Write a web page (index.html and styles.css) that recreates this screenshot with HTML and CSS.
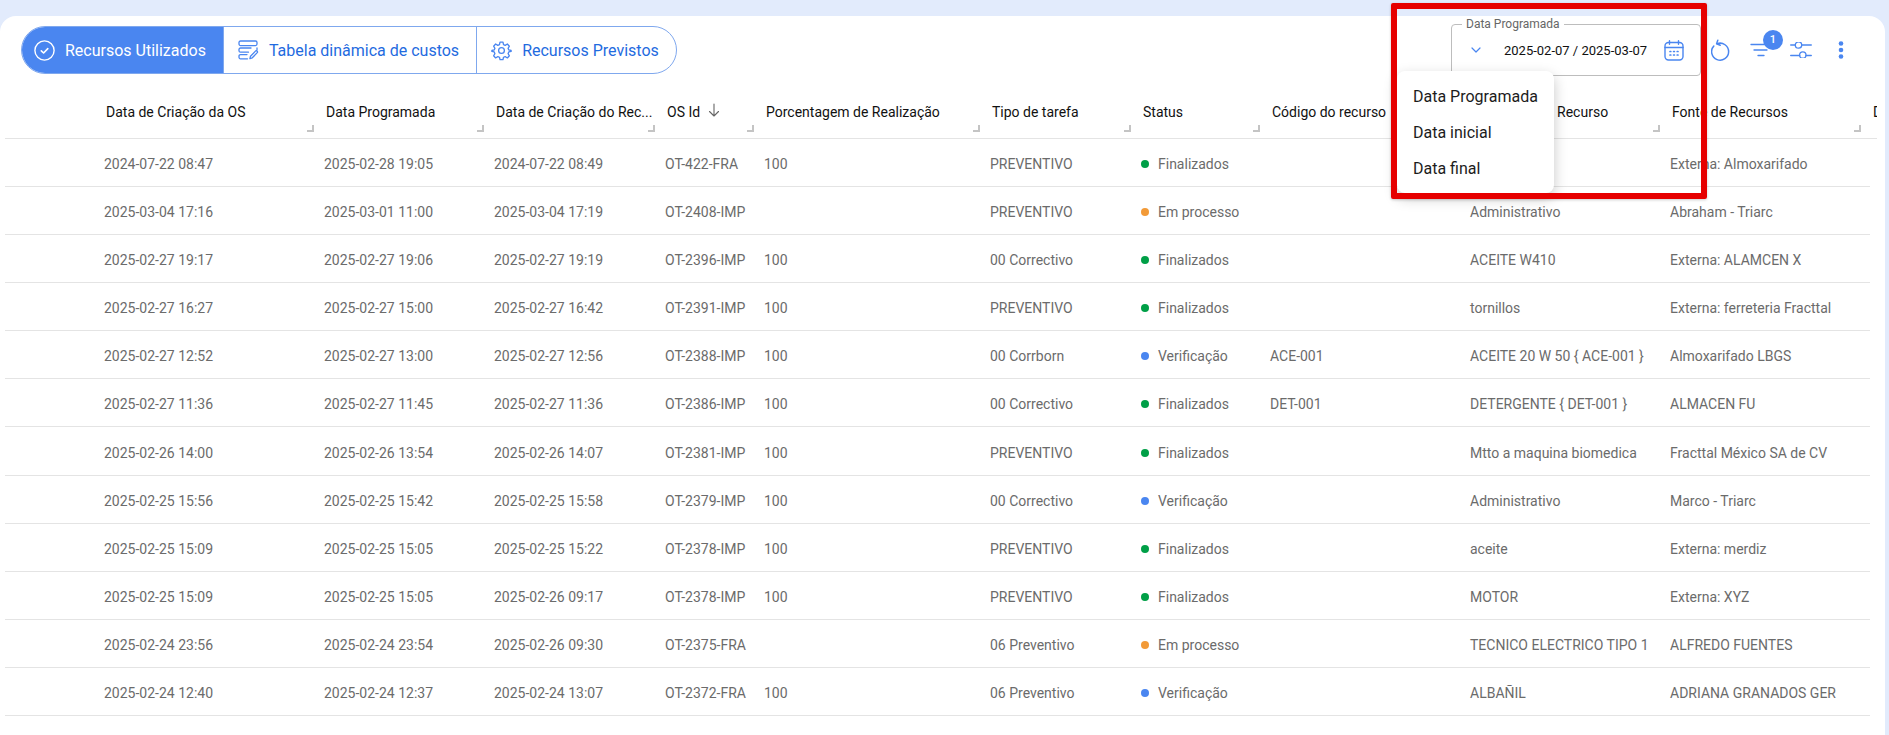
FILE: index.html
```html
<!DOCTYPE html>
<html lang="pt">
<head>
<meta charset="utf-8">
<title>Recursos Utilizados</title>
<link rel="stylesheet" href="styles.css">
</head>
<body>
<div class="app">
  <main class="card">
    <div class="toolbar">
      <nav class="tabs">
        <a class="tab tab-active">
          <svg class="tab-icon" viewBox="0 0 21 21" fill="none" stroke="currentColor" stroke-width="1.4" stroke-linecap="round" stroke-linejoin="round"><circle cx="10.5" cy="10.5" r="9.6"/><path d="M7.3 10.8l2.3 2.2 4.2-4.4" stroke-width="1.6"/></svg>
          <span>Recursos Utilizados</span>
        </a>
        <a class="tab">
          <svg class="tab-icon" viewBox="0 0 21 21" fill="none" stroke="currentColor" stroke-width="1.3" stroke-linecap="round" stroke-linejoin="round"><rect x="1" y="1" width="18" height="4.6" rx="1.5"/><path d="M13 8H2.5A1.5 1.5 0 0 0 1 9.5v1.2a1.5 1.5 0 0 0 1.5 1.5h8M9 14.6H2.5A1.5 1.5 0 0 0 1 16.100v1.200a1.500 1.500 0 0 0 1.500 1.500h7"/><path d="M19 8v1.800M19.500 12.400l-5.200 5.400-2.400.9.600-2.500 5.200-5.300a1.300 1.300 0 0 1 1.800 1.500z"/></svg>
          <span>Tabela dinâmica de custos</span>
        </a>
        <a class="tab">
          <svg class="tab-icon" viewBox="0 0 24 24" fill="none" stroke="currentColor" stroke-width="1.500" stroke-linecap="round" stroke-linejoin="round"><circle cx="12" cy="12" r="3.300"/><path d="M10.300 2.500h3.400l.6 2.900 1.900.8 2.500-1.600 2.300 2.500-1.500 2.400.8 1.900 2.700.6v1l-2.700.7-.8 1.900 1.500 2.400-2.300 2.500-2.500-1.600-1.900.8-.6 2.800h-3.400l-.6-2.800-1.900-.8-2.500 1.600-2.300-2.500 1.500-2.400-.8-1.900-2.700-.7v-1l2.700-.6.8-1.900-1.500-2.400 2.300-2.500 2.500 1.600 1.900-.8z"/></svg>
          <span>Recursos Previstos</span>
        </a>
      </nav>
      <div class="actions">
        <div class="date-field">
          <span class="date-legend">Data Programada</span>
          <svg class="chevron" viewBox="0 0 10 6" fill="none" stroke="#4a86f0" stroke-width="1.200" stroke-linecap="round" stroke-linejoin="round"><path d="M1 1l4 4 4-4"/></svg>
          <span class="date-value">2025-02-07 / 2025-03-07</span>
          <svg class="calendar" viewBox="0 0 20 21" fill="none" stroke="#4a86f0" stroke-width="1.400" stroke-linecap="round"><rect x="1" y="2.500" width="18" height="17.500" rx="3.500"/><path d="M1 7.500h18M5.500 .8v3.500M14.500 .8v3.500"/><path d="M6 11.500h.8M9.600 11.500h.8M13.200 11.500h.8M6 15h.8M9.600 15h.8M13.200 15h.8" stroke-width="1.700"/></svg>
        </div>
        <button class="icon-btn" type="button" aria-label="Recarregar">
          <svg viewBox="0 0 20 20" width="20" height="22" fill="none" stroke="#4a86f0" stroke-width="1.500" stroke-linecap="round" stroke-linejoin="round"><path d="M6.200 3.700A8.500 8.500 0 1 1 2.800 6"/><path d="M6.800 .2L5.600 3.800l3.600 1.400"/></svg>
        </button>
        <button class="icon-btn" type="button" aria-label="Filtros">
          <svg viewBox="0 0 24 14" width="24" height="14" fill="none" stroke="#4a86f0" stroke-width="1.300" stroke-linecap="round"><path d="M2 1.500h19M5 7h13M9 12.500h6"/></svg>
          <span class="badge">1</span>
        </button>
        <button class="icon-btn" type="button" aria-label="Colunas">
          <svg viewBox="0 0 22 16" width="22" height="16" fill="none" stroke="#4a86f0" stroke-width="1.300" stroke-linecap="round"><path d="M.7 3h4.500M12 3h9.300M.7 13.500h9M16 13.500h5.300"/><circle cx="8.500" cy="3" r="3.200"/><circle cx="12.800" cy="13" r="3.200"/></svg>
        </button>
        <button class="icon-btn" type="button" aria-label="Mais">
          <svg viewBox="0 0 6 18" width="6" height="18" fill="#4a86f0"><circle cx="3" cy="2.500" r="2.300"/><circle cx="3" cy="9" r="2.300"/><circle cx="3" cy="15.500" r="2.300"/></svg>
        </button>
      </div>
    </div>

    <section class="grid">
      <div class="row head">
        <div class="hc"></div>
        <div class="hc grip">Data de Criação da OS</div>
        <div class="hc grip">Data Programada</div>
        <div class="hc grip">Data de Criação do Rec...</div>
        <div class="hc grip">OS Id<svg class="sort" viewBox="0 0 12 14" fill="none" stroke="#666" stroke-width="1.100" stroke-linecap="round" stroke-linejoin="round"><path d="M6 1v12M1.500 8.500L6 13l4.500-4.500"/></svg></div>
        <div class="hc grip">Porcentagem de Realização</div>
        <div class="hc grip">Tipo de tarefa</div>
        <div class="hc grip">Status</div>
        <div class="hc grip">Código do recurso</div>
        <div class="hc grip">Descrição do Recurso</div>
        <div class="hc grip">Fonte de Recursos</div>
        <div class="hc">Data</div>
      </div>

      <div class="row body"><div></div><div>2024-07-22 08:47</div><div>2025-02-28 19:05</div><div>2024-07-22 08:49</div><div>OT-422-FRA</div><div>100</div><div>PREVENTIVO</div><div class="st ok">Finalizados</div><div></div><div></div><div>Externa: Almoxarifado</div><div></div></div>
      <div class="row body"><div></div><div>2025-03-04 17:16</div><div>2025-03-01 11:00</div><div>2025-03-04 17:19</div><div>OT-2408-IMP</div><div></div><div>PREVENTIVO</div><div class="st wip">Em processo</div><div></div><div>Administrativo</div><div>Abraham - Triarc</div><div></div></div>
      <div class="row body"><div></div><div>2025-02-27 19:17</div><div>2025-02-27 19:06</div><div>2025-02-27 19:19</div><div>OT-2396-IMP</div><div>100</div><div>00 Correctivo</div><div class="st ok">Finalizados</div><div></div><div>ACEITE W410</div><div>Externa: ALAMCEN X</div><div></div></div>
      <div class="row body"><div></div><div>2025-02-27 16:27</div><div>2025-02-27 15:00</div><div>2025-02-27 16:42</div><div>OT-2391-IMP</div><div>100</div><div>PREVENTIVO</div><div class="st ok">Finalizados</div><div></div><div>tornillos</div><div>Externa: ferreteria Fracttal</div><div></div></div>
      <div class="row body"><div></div><div>2025-02-27 12:52</div><div>2025-02-27 13:00</div><div>2025-02-27 12:56</div><div>OT-2388-IMP</div><div>100</div><div>00 Corrborn</div><div class="st ver">Verificação</div><div>ACE-001</div><div>ACEITE 20 W 50 { ACE-001 }</div><div>Almoxarifado LBGS</div><div></div></div>
      <div class="row body"><div></div><div>2025-02-27 11:36</div><div>2025-02-27 11:45</div><div>2025-02-27 11:36</div><div>OT-2386-IMP</div><div>100</div><div>00 Correctivo</div><div class="st ok">Finalizados</div><div>DET-001</div><div>DETERGENTE { DET-001 }</div><div>ALMACEN FU</div><div></div></div>
      <div class="row body"><div></div><div>2025-02-26 14:00</div><div>2025-02-26 13:54</div><div>2025-02-26 14:07</div><div>OT-2381-IMP</div><div>100</div><div>PREVENTIVO</div><div class="st ok">Finalizados</div><div></div><div>Mtto a maquina biomedica</div><div>Fracttal México SA de CV</div><div></div></div>
      <div class="row body"><div></div><div>2025-02-25 15:56</div><div>2025-02-25 15:42</div><div>2025-02-25 15:58</div><div>OT-2379-IMP</div><div>100</div><div>00 Correctivo</div><div class="st ver">Verificação</div><div></div><div>Administrativo</div><div>Marco - Triarc</div><div></div></div>
      <div class="row body"><div></div><div>2025-02-25 15:09</div><div>2025-02-25 15:05</div><div>2025-02-25 15:22</div><div>OT-2378-IMP</div><div>100</div><div>PREVENTIVO</div><div class="st ok">Finalizados</div><div></div><div>aceite</div><div>Externa: merdiz</div><div></div></div>
      <div class="row body"><div></div><div>2025-02-25 15:09</div><div>2025-02-25 15:05</div><div>2025-02-26 09:17</div><div>OT-2378-IMP</div><div>100</div><div>PREVENTIVO</div><div class="st ok">Finalizados</div><div></div><div>MOTOR</div><div>Externa: XYZ</div><div></div></div>
      <div class="row body"><div></div><div>2025-02-24 23:56</div><div>2025-02-24 23:54</div><div>2025-02-26 09:30</div><div>OT-2375-FRA</div><div></div><div>06 Preventivo</div><div class="st wip">Em processo</div><div></div><div>TECNICO ELECTRICO TIPO 1</div><div>ALFREDO FUENTES</div><div></div></div>
      <div class="row body"><div></div><div>2025-02-24 12:40</div><div>2025-02-24 12:37</div><div>2025-02-24 13:07</div><div>OT-2372-FRA</div><div>100</div><div>06 Preventivo</div><div class="st ver">Verificação</div><div></div><div>ALBAÑIL</div><div>ADRIANA GRANADOS GER</div><div></div></div>
    </section>
  </main>

  <ul class="menu">
    <li>Data Programada</li>
    <li>Data inicial</li>
    <li>Data final</li>
  </ul>
  <div class="highlight"></div>
</div>
</body>
</html>
```

FILE: styles.css
```css
* { box-sizing: border-box; }
html, body { margin: 0; height: 100%; }
body {
  background: #e2ebfc;
  font-family: Roboto, "Liberation Sans", sans-serif;
  font-size: 14px;
  overflow: hidden;
}
.app { position: relative; height: 735px; padding: 16px 4px 0 0; }
.card {
  height: 100%;
  background: #fff;
  border-radius: 16px 16px 0 0;
}
.toolbar {
  display: flex;
  justify-content: space-between;
  align-items: flex-start;
  height: 60px;
  padding: 8px 24px 0 21px;
}
.tabs {
  display: flex;
  height: 48px;
  margin-top: 2px;
  border: 1px solid #7fa8ee;
  border-radius: 24px;
  overflow: hidden;
}
.tab {
  display: flex;
  align-items: center;
  gap: 10px;
  padding: 0 17px 0 14px;
  font-size: 16px;
  color: #1f6be0;
  white-space: nowrap;
}
.tab + .tab { border-left: 1px solid #7fa8ee; }
.tab:first-child { padding-left: 13px; }
.tab-active { background: #4a86f0; color: #fff; margin: -1px 0 -1px -1px; }
.tab-icon { width: 21px; height: 21px; color: #4a86f0; flex: none; }
.tab-active .tab-icon { color: #fff; }
.actions { display: flex; align-items: center; }
.date-field {
  position: relative;
  display: flex;
  align-items: center;
  width: 250px;
  height: 52px;
  padding: 0 16px 0 19px;
  border: 1px solid #bdbdbd;
  border-radius: 4px;
}
.date-legend {
  position: absolute;
  left: 10px;
  top: -8px;
  padding: 0 4px;
  background: #fff;
  font-size: 12px;
  line-height: 14px;
  color: #666;
}
.chevron { width: 10px; height: 6px; flex: none; }
.date-value { margin-left: 23px; font-size: 13px; color: #111; white-space: nowrap; }
.calendar { width: 20px; height: 21px; margin-left: auto; flex: none; }
.icon-btn {
  position: relative;
  display: flex;
  align-items: center;
  justify-content: center;
  width: 40px;
  height: 40px;
  padding: 0;
  border: 0;
  background: none;
}
.badge {
  position: absolute;
  left: 22px;
  top: 0;
  width: 20px;
  height: 20px;
  border-radius: 50%;
  background: #4a86f0;
  color: #fff;
  font: 500 11px/20px Roboto, sans-serif;
  text-align: center;
}
.grid { margin: 10px 8px 0 5px; overflow: hidden; }
.row {
  display: grid;
  grid-template-columns: 92px 220px 170px 171px 99px 226px 151px 129px 200px 200px 201px minmax(0, 1fr);
  border-bottom: 1px solid #e4e4e4;
}
.head { height: 53px; color: #111; }
.hc {
  position: relative;
  padding: 18px 0 0 9px;
  line-height: 16px;
  white-space: nowrap;
  overflow: hidden;
}
.grip::after {
  content: "";
  position: absolute;
  right: 3px;
  bottom: 6px;
  width: 5px;
  height: 5px;
  border-right: 2px solid #c4c4c4;
  border-bottom: 2px solid #c4c4c4;
}
.sort { width: 12px; height: 14px; margin: -6px 0 0 8px; vertical-align: middle; }
.body { height: 48.080px; margin-right: 7px; color: #6b6b6b; }
.body > div {
  display: flex;
  align-items: center;
  padding: 3px 0 0 7px;
  white-space: nowrap;
}
.st::before {
  content: "";
  width: 8px;
  height: 8px;
  margin-right: 9px;
  border-radius: 50%;
  flex: none;
}
.ok::before { background: #009f47; }
.wip::before { background: #f29a38; }
.ver::before { background: #4a86f0; }
.menu {
  position: absolute;
  left: 1397px;
  top: 71px;
  width: 157px;
  height: 122px;
  margin: 0;
  padding: 8px 0;
  list-style: none;
  background: #fff;
  border-radius: 8px;
  box-shadow: 0 5px 14px rgba(0, 0, 0, .22);
  font-size: 16px;
  color: #1c1c1c;
}
.menu li { height: 36px; padding-left: 16px; line-height: 36px; white-space: nowrap; }
.highlight {
  position: absolute;
  left: 1391px;
  top: 3px;
  width: 316px;
  height: 196px;
  border: 6px solid #e60000;
  border-radius: 2px;
  box-shadow: 0 1px 3px rgba(0, 0, 0, .2);
}
```
